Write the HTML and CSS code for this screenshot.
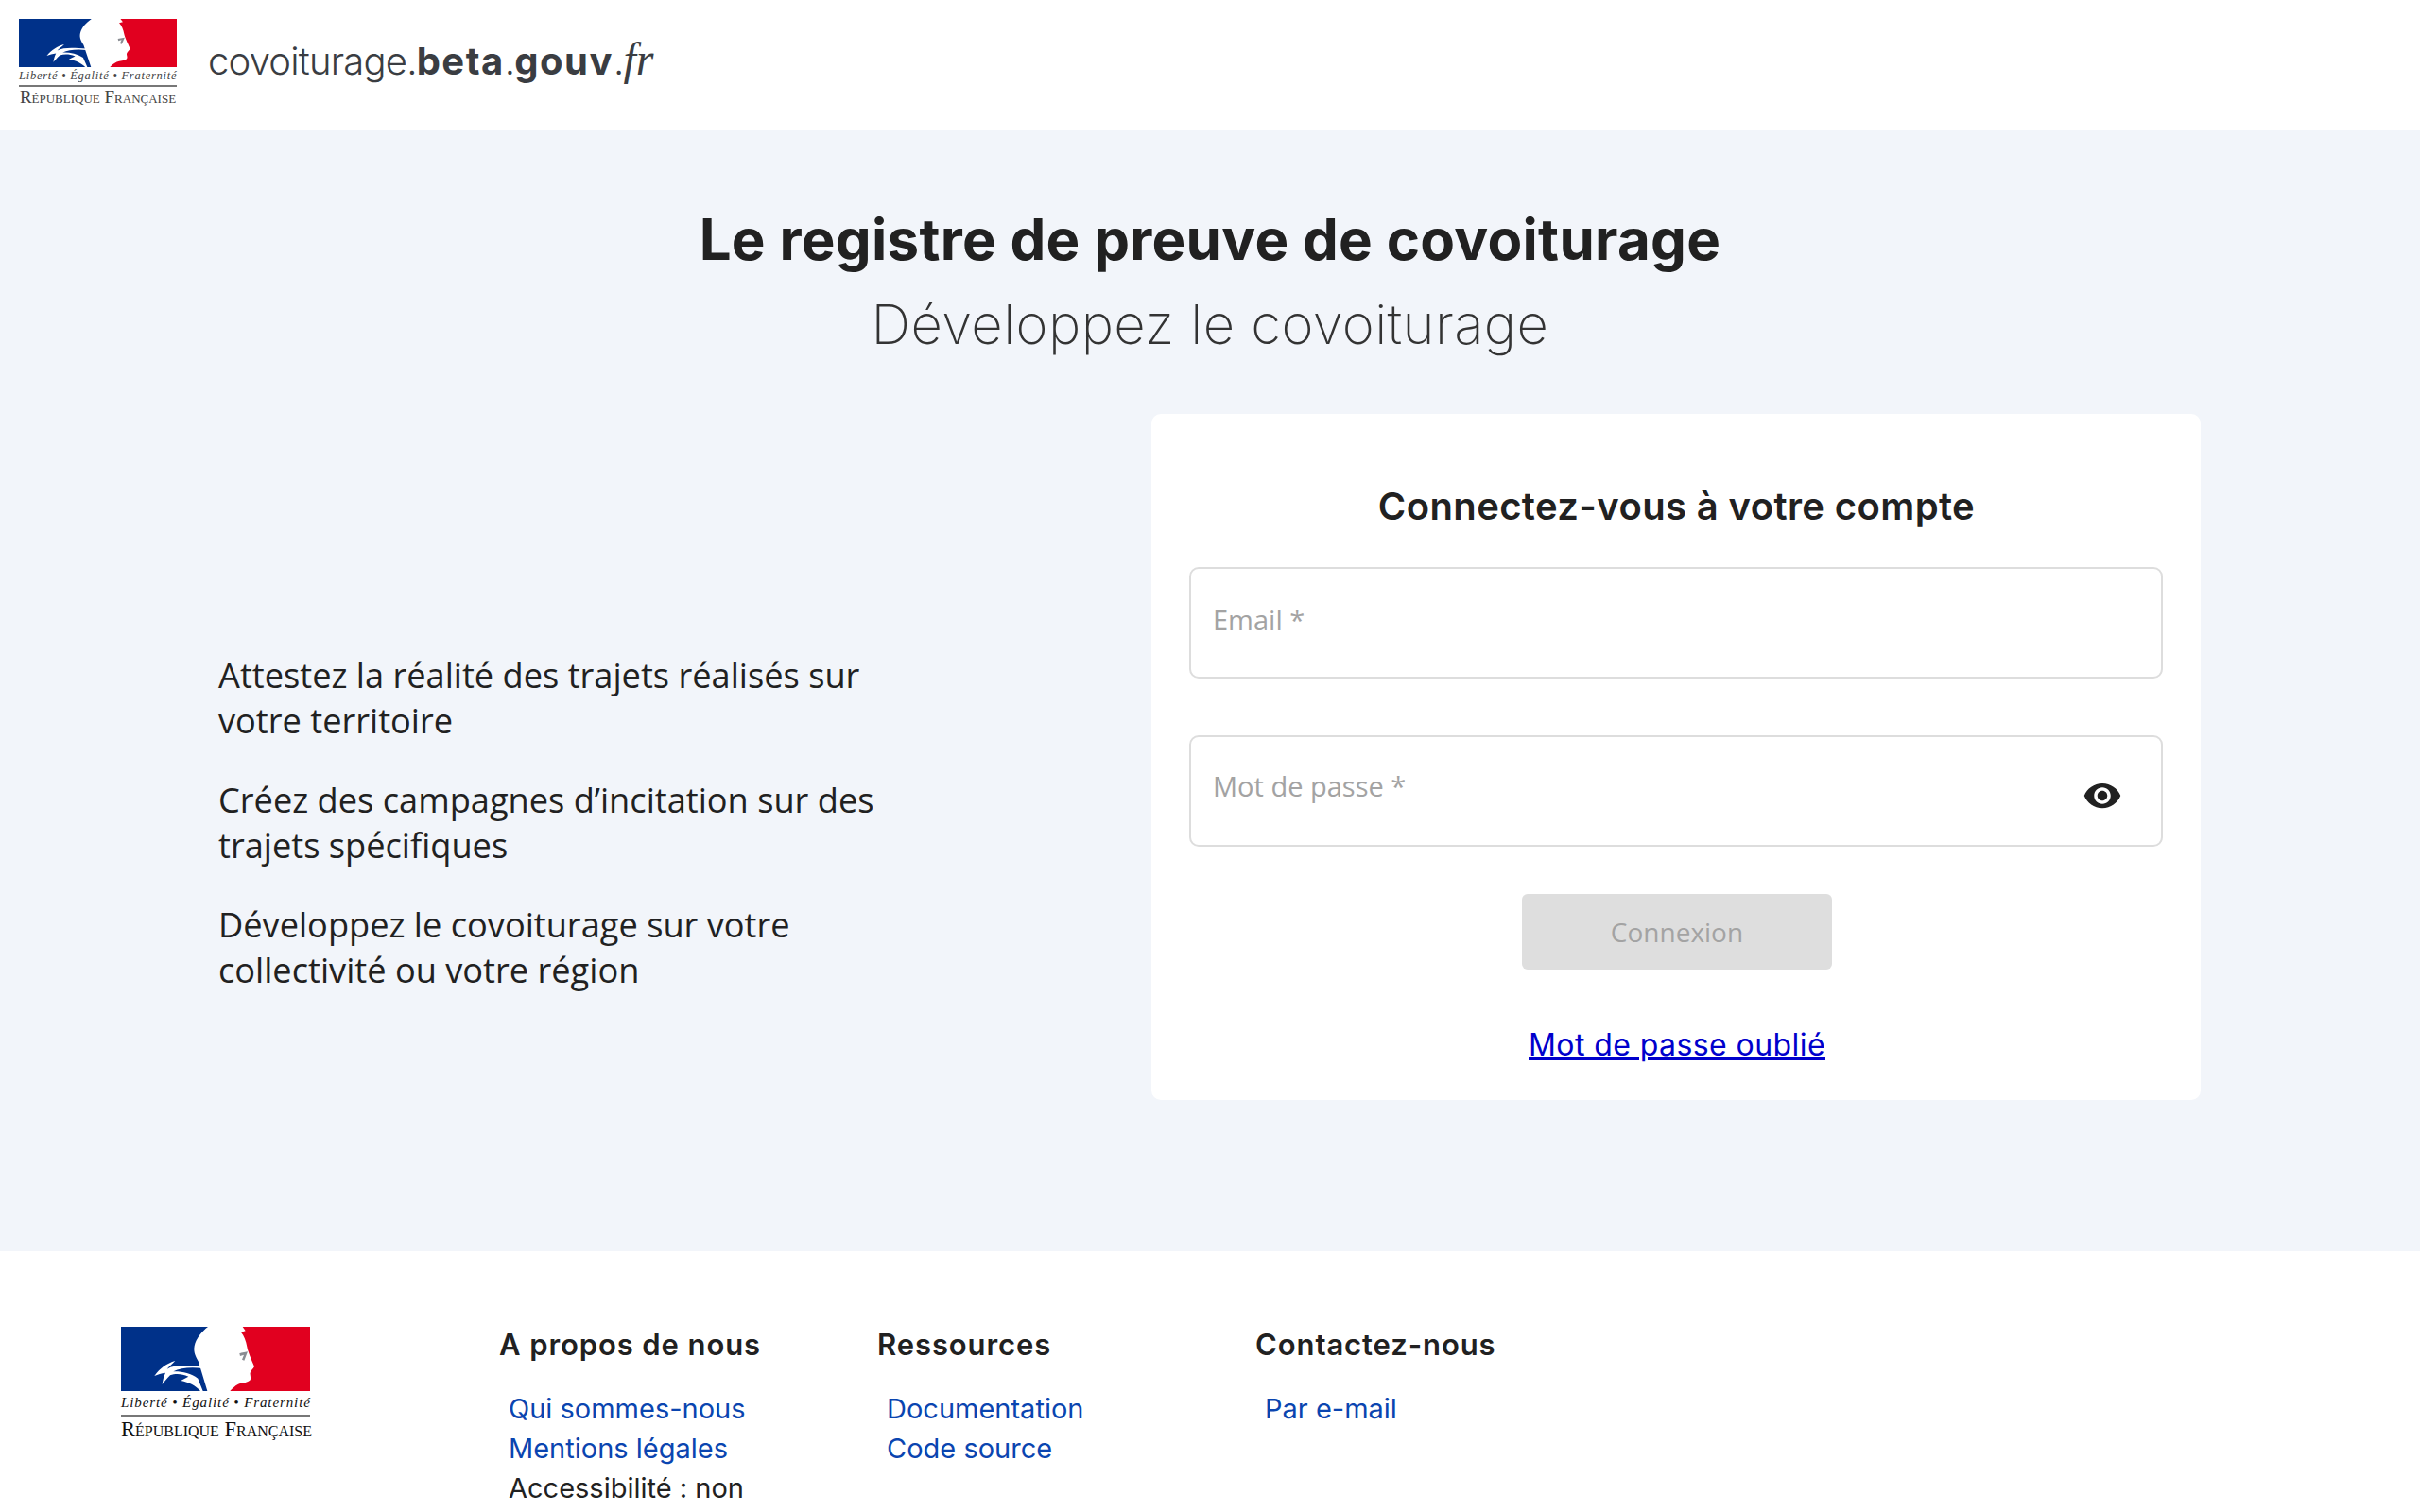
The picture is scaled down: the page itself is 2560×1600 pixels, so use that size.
FILE: index.html
```html
<!DOCTYPE html>
<html lang="fr">
<head>
<meta charset="UTF-8" />
<title>Registre de preuve de covoiturage</title>
<link rel="stylesheet" href="styles.css">
</head>
<body>

<svg class="defs" width="0" height="0">
  <symbol id="flag" viewBox="24 24 600 204" preserveAspectRatio="none">
    <rect x="24" y="24" width="600" height="204" fill="#fff"/>
    <path fill="#003189" d="M24 24H300C282 38 262 60 257 85C253 105 262 120 270 135L282 175L298 228H24Z"/>
    <path fill="#e1001f" d="M410 24L419 37L405 41C414 52 421 68 424 88C426 100 436 125 447 150C444 158 436 162 434 170C432 178 439 186 433 194C424 202 408 201 396 206C385 212 377 220 370 228H624V24Z"/>
    <path fill="#fff" d="M130 180C148 155 170 140 196 132C186 143 176 150 170 158C195 143 235 147 280 150L282 156C245 151 212 155 190 166C218 165 245 172 268 188L284 228H276C262 212 240 200 214 195L238 182C216 172 196 172 180 178C170 188 162 198 155 207C157 192 160 180 165 170C152 172 141 175 130 180Z"/>
    <path fill="#8a8d93" d="M400 108L426 103L415 131L408 128L414 113L402 117Z"/>
  </symbol>
</svg>

<div class="page">
  <header class="topbar">
    <div class="marianne marianne-small">
      <svg class="flag"><use href="#flag"/></svg>
      <div class="motto">Liberté • Égalité • Fraternité</div>
      <div class="republic">République Française</div>
    </div>
    <div class="wordmark">covoiturage.<b>beta</b>.<b>gouv</b>.<i>fr</i></div>
  </header>

  <main class="content">
    <h1>Le registre de preuve de covoiturage</h1>
    <h2>Développez le covoiturage</h2>
    <div class="columns">
      <div class="pitch">
        <p>Attestez la réalité des trajets réalisés sur votre territoire</p>
        <p>Créez des campagnes d’incitation sur des trajets spécifiques</p>
        <p>Développez le covoiturage sur votre collectivité ou votre région</p>
      </div>
      <form class="login-card">
        <h3>Connectez-vous à votre compte</h3>
        <div class="field field-email">
          <input type="text" placeholder="Email *" />
        </div>
        <div class="field field-password">
          <input type="password" placeholder="Mot de passe *" />
          <svg class="eye" viewBox="0 0 24 24"><path d="M12 4.5C7 4.5 2.73 7.61 1 12c1.73 4.39 6 7.5 11 7.5s9.27-3.11 11-7.5c-1.73-4.39-6-7.5-11-7.5zM12 17c-2.76 0-5-2.24-5-5s2.24-5 5-5 5 2.24 5 5-2.24 5-5 5zm0-8c-1.66 0-3 1.34-3 3s1.34 3 3 3 3-1.34 3-3-1.34-3-3-3z"/></svg>
        </div>
        <button type="button" class="submit" disabled>Connexion</button>
        <a class="forgot" href="#">Mot de passe oublié</a>
      </form>
    </div>
  </main>

  <footer class="footer">
    <div class="marianne marianne-large">
      <svg class="flag"><use href="#flag"/></svg>
      <div class="motto">Liberté • Égalité • Fraternité</div>
      <div class="republic">République Française</div>
    </div>
    <div class="footer-col">
      <h4>A propos de nous</h4>
      <a href="#">Qui sommes-nous</a>
      <a href="#">Mentions légales</a>
      <span>Accessibilité : non conforme</span>
    </div>
    <div class="footer-col">
      <h4>Ressources</h4>
      <a href="#">Documentation</a>
      <a href="#">Code source</a>
    </div>
    <div class="footer-col">
      <h4>Contactez-nous</h4>
      <a href="#">Par e-mail</a>
    </div>
  </footer>
</div>

</body>
</html>
```
FILE: styles.css
```css
body {
  margin: 0;
  font-family: "Open Sans", sans-serif;
  color: #212121;
  background: #fff;
}
.defs {
  position: absolute;
}
.page {
  height: 100vh;
  overflow: hidden;
}

/* header */
.topbar {
  height: 138px;
  box-sizing: border-box;
  padding: 20px 0 0 20px;
  display: flex;
  align-items: flex-start;
  gap: 33px;
}
.marianne {
  display: flex;
  flex-direction: column;
  font-family: "Liberation Serif", serif;
}
.flag {
  display: block;
  width: 100%;
}
.motto {
  font-style: italic;
  white-space: nowrap;
  text-align: center;
  border-bottom: 2px solid #777;
}
.republic {
  font-variant: small-caps;
  white-space: nowrap;
  text-align: center;
}
.marianne-small {
  width: 167px;
  color: #444;
}
.marianne-small .flag {
  height: 51px;
}
.marianne-small .motto {
  font-size: 12.5px;
  letter-spacing: 0.75px;
  line-height: 19px;
}
.marianne-small .republic {
  font-size: 19px;
  line-height: 22px;
}
.marianne-large {
  width: 200px;
  color: #111;
}
.marianne-large .flag {
  height: 68px;
}
.marianne-large .motto {
  font-size: 15px;
  letter-spacing: 0.9px;
  line-height: 25px;
}
.marianne-large .republic {
  font-size: 22.5px;
  line-height: 27px;
}
.wordmark {
  font-family: Inter, sans-serif;
  font-weight: 300;
  font-size: 40px;
  letter-spacing: -0.8px;
  line-height: 48px;
  margin-top: 19px;
  color: #3a3d42;
  white-space: nowrap;
}
.wordmark b {
  font-weight: 700;
  letter-spacing: 1.5px;
}
.wordmark i {
  font-family: "Liberation Serif", serif;
  font-size: 48px;
  letter-spacing: 0;
}

/* main */
.content {
  height: 1186px;
  box-sizing: border-box;
  background: #f2f5fa;
  padding-top: 80px;
  text-align: center;
}
h1 {
  margin: 0;
  font-family: Inter, sans-serif;
  font-weight: 700;
  font-size: 60px;
  letter-spacing: 0.3px;
  line-height: 70px;
}
h2 {
  margin: 20px 0 0;
  font-family: Inter, sans-serif;
  font-weight: 200;
  font-size: 58px;
  letter-spacing: 0.4px;
  line-height: 70px;
  color: #333;
}
.columns {
  display: flex;
  justify-content: space-between;
  align-items: center;
  margin: 60px 232px 0 231px;
  text-align: left;
}
.pitch {
  width: 720px;
  padding-top: 138px;
}
.pitch p {
  margin: 0 0 36px;
  font-size: 36.2px;
  line-height: 48px;
}
.pitch p:last-child {
  margin-bottom: 0;
}
.login-card {
  width: 1110px;
  height: 726px;
  box-sizing: border-box;
  background: #fff;
  border-radius: 10px;
  padding: 70px 40px 0;
  display: flex;
  flex-direction: column;
  align-items: center;
}
.login-card h3 {
  margin: 0 0 36px 1px;
  font-family: Inter, sans-serif;
  font-weight: 600;
  font-size: 40px;
  letter-spacing: 0.38px;
  line-height: 56px;
}
.field {
  align-self: stretch;
  height: 118px;
  box-sizing: border-box;
  border: 2px solid #ddd;
  border-radius: 10px;
  display: flex;
  align-items: center;
  padding: 0 41px 0 21px;
}
.field-email {
  margin-bottom: 60px;
}
.field-email input {
  padding-bottom: 8px;
}
.field-password input {
  padding-bottom: 12px;
}
.field input {
  flex: 1;
  border: none;
  outline: none;
  background: none;
  font-family: "Open Sans", sans-serif;
  font-size: 29px;
  min-width: 0;
}
.field input::placeholder {
  color: #a3a3a3;
}
.eye {
  width: 42px;
  height: 42px;
  fill: #212121;
  margin-top: 10px;
}
.submit {
  width: 328px;
  height: 80px;
  margin: 50px 0 0 2px;
  border: none;
  border-radius: 6px;
  background: #dedede;
  color: #a3a3a3;
  font-family: "Open Sans", sans-serif;
  font-size: 28px;
}
.forgot {
  margin: 57px 0 0 2px;
  font-family: Inter, sans-serif;
  font-size: 32px;
  letter-spacing: 0.42px;
  line-height: 46px;
  color: #0000cc;
}

/* footer */
.footer {
  display: grid;
  grid-template-columns: repeat(4, 400px);
  padding: 80px 0 0 128px;
  background: #fff;
}
.footer-col {
  display: flex;
  flex-direction: column;
  align-items: flex-start;
  width: 300px;
  font-family: Inter, sans-serif;
  font-size: 29px;
  line-height: 42px;
}
.footer-col h4 {
  margin: 0 0 28px;
  font-size: 31px;
  font-weight: 600;
  letter-spacing: 0.9px;
  line-height: 38px;
}
.footer-col a,
.footer-col span {
  margin-left: 10px;
}
.footer-col a {
  color: #0a45b0;
  text-decoration: none;
}
```
